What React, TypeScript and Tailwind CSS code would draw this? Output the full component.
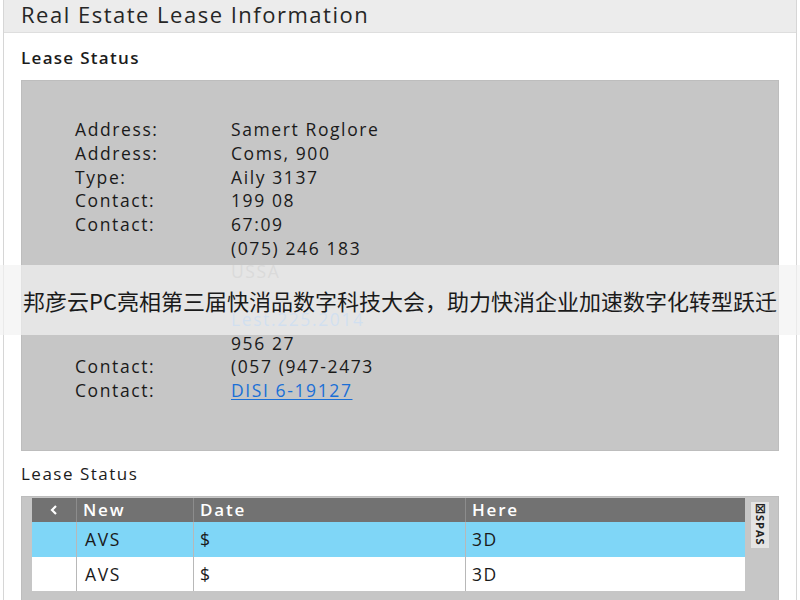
import React from "react";

const details: { label: string; value: string; tone?: "muted" | "faded" | "link" }[] = [
  { label: "Address:", value: "Samert Roglore" },
  { label: "Address:", value: "Coms, 900" },
  { label: "Type:", value: "Aily 3137" },
  { label: "Contact:", value: "199 08" },
  { label: "Contact:", value: "67:09" },
  { label: "", value: "(075) 246 183" },
  { label: "", value: "USSA", tone: "muted" },
  { label: "", value: "" },
  { label: "", value: "Lest.225.2014", tone: "faded" },
  { label: "", value: "956 27" },
  { label: "Contact:", value: "(057 (947-2473" },
  { label: "Contact:", value: "DISI 6-19127", tone: "link" },
];

const rows = [
  { name: "AVS", date: "$", here: "3D", active: true },
  { name: "AVS", date: "$", here: "3D", active: false },
];

function valueClass(tone?: string) {
  if (tone === "muted") return "text-[#a0a0a0]";
  if (tone === "faded") return "text-[#84b3e8]";
  if (tone === "link") return "text-[#1a6fd6] underline underline-offset-2";
  return "text-[#1a1a1a]";
}

export default function App() {
  return (
    <div
      className="relative h-[600px] w-[800px] overflow-hidden bg-white"
      style={{ fontFamily: '"Open Sans", "Noto Sans", sans-serif' }}
    >
      <div className="mx-[3px] min-h-full border-x border-[#d6d6d6]">
        {/* Title bar */}
        <div className="h-[33px] border-b border-[#dedede] bg-[#ececec] pl-[17px] pt-[1px]">
          <h1 className="text-[22px] leading-[26px] tracking-[1.5px] text-[#262626]">
            Real Estate Lease Information
          </h1>
        </div>

        <div className="px-[17px] pt-[13px]">
          <h2 className="text-[17px] font-semibold leading-[24px] tracking-[1.3px] text-[#1c1c1c]">
            Lease Status
          </h2>

          {/* Detail panel */}
          <div className="mt-[10px] h-[371px] border border-[#bdbdbd] bg-[#c6c6c6] pl-[53px] pt-[37px]">
            {details.map((d, i) => (
              <div
                key={i}
                className="flex h-[23.7px] items-center text-[17.5px] font-medium leading-[23px] tracking-[1.6px]"
              >
                <span className="w-[156px] text-[#1a1a1a]">{d.label}</span>
                <span className={valueClass(d.tone)}>{d.value}</span>
              </div>
            ))}
          </div>

          <h2 className="mt-[11px] text-[17px] leading-[24px] tracking-[1.5px] text-[#1c1c1c]">Lease Status</h2>

          {/* Table panel */}
          <div className="mt-[10px] flex h-[120px] border border-[#bdbdbd] bg-[#c6c6c6] pl-[10px] pt-[1px]">
            <div className="w-[713px]">
              <div className="flex h-[24px] items-center bg-[#727272] text-[17px] font-semibold tracking-[1.8px] text-white">
                <div className="flex h-full w-[45px] items-center justify-center border-r border-[#8c8c8c]">
                  <svg width="10" height="12" viewBox="0 0 10 12" fill="none">
                    <path d="M7 2 L3 6 L7 10" stroke="white" strokeWidth="2.2" />
                  </svg>
                </div>
                <div className="flex h-full w-[117px] items-center border-r border-[#8c8c8c] pl-[6px]">New</div>
                <div className="flex h-full w-[272px] items-center border-r border-[#8c8c8c] pl-[6px]">Date</div>
                <div className="flex h-full flex-1 items-center pl-[6px]">Here</div>
              </div>
              {rows.map((r, i) => (
                <div
                  key={i}
                  className={`flex h-[34.5px] items-center text-[17.5px] font-medium tracking-[1.6px] text-[#1a1a1a] ${
                    r.active ? "bg-[#7fd6f7]" : "bg-white"
                  }`}
                >
                  <div className="h-full w-[45px] border-r border-[#b8b8b8]" />
                  <div className="flex h-full w-[117px] items-center border-r border-[#b8b8b8] pl-[8px]">{r.name}</div>
                  <div className="flex h-full w-[272px] items-center border-r border-[#b8b8b8] pl-[6px]">{r.date}</div>
                  <div className="flex h-full flex-1 items-center pl-[6px]">{r.here}</div>
                </div>
              ))}
            </div>
            <div className="ml-[6px] mt-[4px] flex h-[46px] w-[18px] flex-col items-center bg-[#e4e4e4] pt-[1px]">
              <span className="text-[12px] font-bold leading-[12px] text-[#222]">☒</span>
              <span className="text-[11px] font-bold leading-[12px] tracking-[1px] text-[#222] [writing-mode:vertical-rl]">
                SPAS
              </span>
            </div>
          </div>
        </div>
      </div>

      {/* Overlay banner */}
      <div className="absolute left-0 right-0 top-[265px] flex h-[70px] items-center justify-center bg-[#f2f2f2]/70">
        <p
          className="whitespace-nowrap text-[22px] text-[#1a1a1a]"
          style={{ fontFamily: '"Noto Sans CJK SC", "Noto Sans", sans-serif' }}
        >
          邦彦云PC亮相第三届快消品数字科技大会，助力快消企业加速数字化转型跃迁
        </p>
      </div>
    </div>
  );
}
